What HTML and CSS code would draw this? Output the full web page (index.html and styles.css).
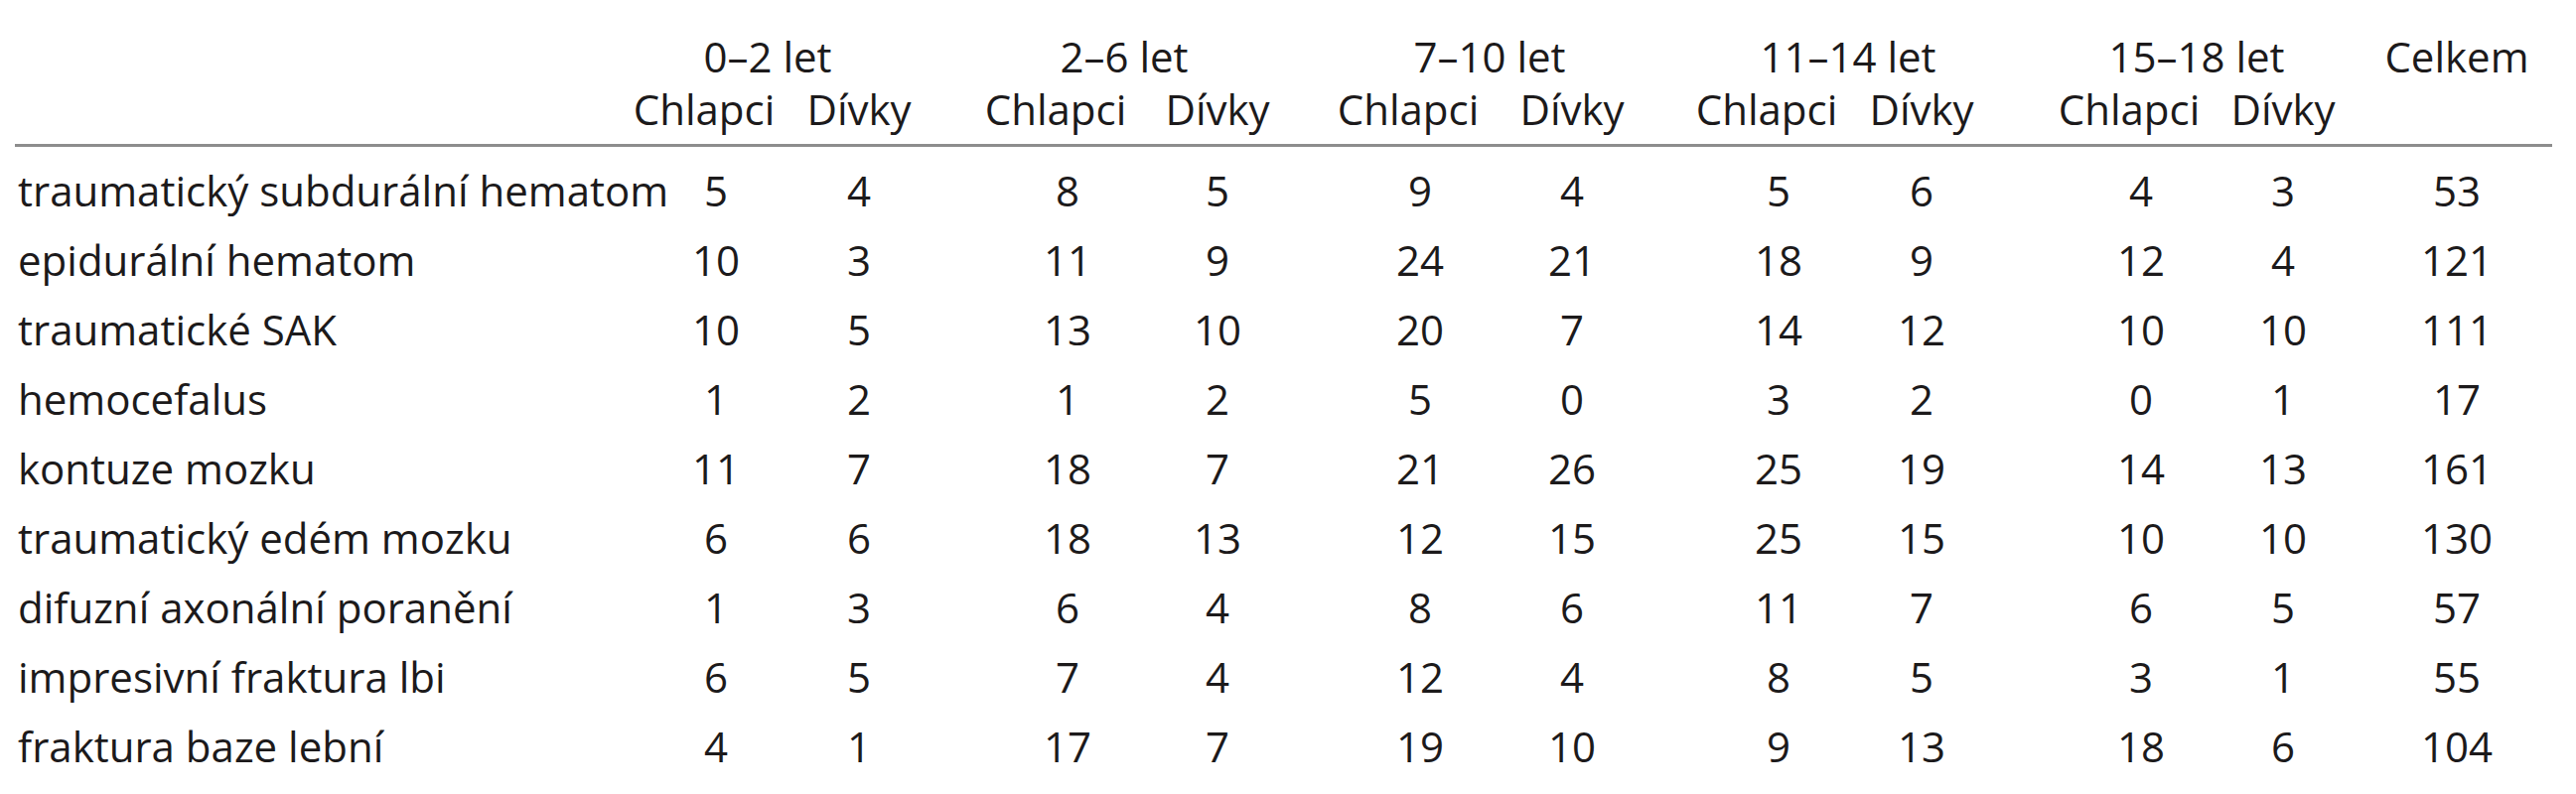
FILE: index.html
```html
<!DOCTYPE html>
<html lang="cs">
<head>
<meta charset="utf-8">
<title>Tabulka</title>
<link rel="stylesheet" href="styles.css">
</head>
<body>
<div class="table">
  <div class="thead">
    <div class="blank"></div>
    <div class="grp">0–2 let</div>
    <div class="grp">2–6 let</div>
    <div class="grp">7–10 let</div>
    <div class="grp">11–14 let</div>
    <div class="grp">15–18 let</div>
    <div class="tot">Celkem</div>
    <div class="blank"></div>
    <div class="hc">Chlapci</div><div class="hd">Dívky</div>
    <div class="hc">Chlapci</div><div class="hd">Dívky</div>
    <div class="hc">Chlapci</div><div class="hd">Dívky</div>
    <div class="hc">Chlapci</div><div class="hd">Dívky</div>
    <div class="hc">Chlapci</div><div class="hd">Dívky</div>
    <div class="blank"></div>
  </div>
  <div class="tbody">
    <div class="row"><div class="label">traumatický subdurální hematom</div><div class="c">5</div><div class="d">4</div><div class="c">8</div><div class="d">5</div><div class="c">9</div><div class="d">4</div><div class="c">5</div><div class="d">6</div><div class="c">4</div><div class="d">3</div><div class="tot">53</div></div>
    <div class="row"><div class="label">epidurální hematom</div><div class="c">10</div><div class="d">3</div><div class="c">11</div><div class="d">9</div><div class="c">24</div><div class="d">21</div><div class="c">18</div><div class="d">9</div><div class="c">12</div><div class="d">4</div><div class="tot">121</div></div>
    <div class="row"><div class="label">traumatické SAK</div><div class="c">10</div><div class="d">5</div><div class="c">13</div><div class="d">10</div><div class="c">20</div><div class="d">7</div><div class="c">14</div><div class="d">12</div><div class="c">10</div><div class="d">10</div><div class="tot">111</div></div>
    <div class="row"><div class="label">hemocefalus</div><div class="c">1</div><div class="d">2</div><div class="c">1</div><div class="d">2</div><div class="c">5</div><div class="d">0</div><div class="c">3</div><div class="d">2</div><div class="c">0</div><div class="d">1</div><div class="tot">17</div></div>
    <div class="row"><div class="label">kontuze mozku</div><div class="c">11</div><div class="d">7</div><div class="c">18</div><div class="d">7</div><div class="c">21</div><div class="d">26</div><div class="c">25</div><div class="d">19</div><div class="c">14</div><div class="d">13</div><div class="tot">161</div></div>
    <div class="row"><div class="label">traumatický edém mozku</div><div class="c">6</div><div class="d">6</div><div class="c">18</div><div class="d">13</div><div class="c">12</div><div class="d">15</div><div class="c">25</div><div class="d">15</div><div class="c">10</div><div class="d">10</div><div class="tot">130</div></div>
    <div class="row"><div class="label">difuzní axonální poranění</div><div class="c">1</div><div class="d">3</div><div class="c">6</div><div class="d">4</div><div class="c">8</div><div class="d">6</div><div class="c">11</div><div class="d">7</div><div class="c">6</div><div class="d">5</div><div class="tot">57</div></div>
    <div class="row"><div class="label">impresivní fraktura lbi</div><div class="c">6</div><div class="d">5</div><div class="c">7</div><div class="d">4</div><div class="c">12</div><div class="d">4</div><div class="c">8</div><div class="d">5</div><div class="c">3</div><div class="d">1</div><div class="tot">55</div></div>
    <div class="row"><div class="label">fraktura baze lební</div><div class="c">4</div><div class="d">1</div><div class="c">17</div><div class="d">7</div><div class="c">19</div><div class="d">10</div><div class="c">9</div><div class="d">13</div><div class="c">18</div><div class="d">6</div><div class="tot">104</div></div>
  </div>
</div>
</body>
</html>
```
FILE: styles.css
```css
html, body {
  margin: 0;
  padding: 0;
  background: #ffffff;
}

body {
  font-family: "Open Sans", "Noto Sans", "Liberation Sans", sans-serif;
  font-size: 42px;
  color: #1c1a1b;
  white-space: nowrap;
}

.table {
  width: 2555px;
  padding: 30px 0 0 15px;
}

.thead,
.row {
  display: grid;
  grid-template-columns: 632px 148px 204px 152px 214px 130px 240px 112px 240px 138px 212px 133px;
}

.thead {
  grid-template-rows: 53px 53px;
  line-height: 53px;
  padding-bottom: 9px;
  border-bottom: 3px solid #8d8d8d;
}

.tbody {
  padding-top: 9px;
}

.row {
  line-height: 70px;
}

.grp {
  grid-column: span 2;
  justify-self: unsafe center;
  margin-right: 100px;
}

.hc {
  justify-self: unsafe center;
  margin-right: 24px;
}

.hd,
.d {
  justify-self: unsafe center;
  margin-right: 64px;
}

.c {
  justify-self: unsafe center;
}

.tot {
  justify-self: unsafe center;
  margin-right: 59px;
}

.label {
  padding-left: 3px;
  justify-self: start;
}
```
